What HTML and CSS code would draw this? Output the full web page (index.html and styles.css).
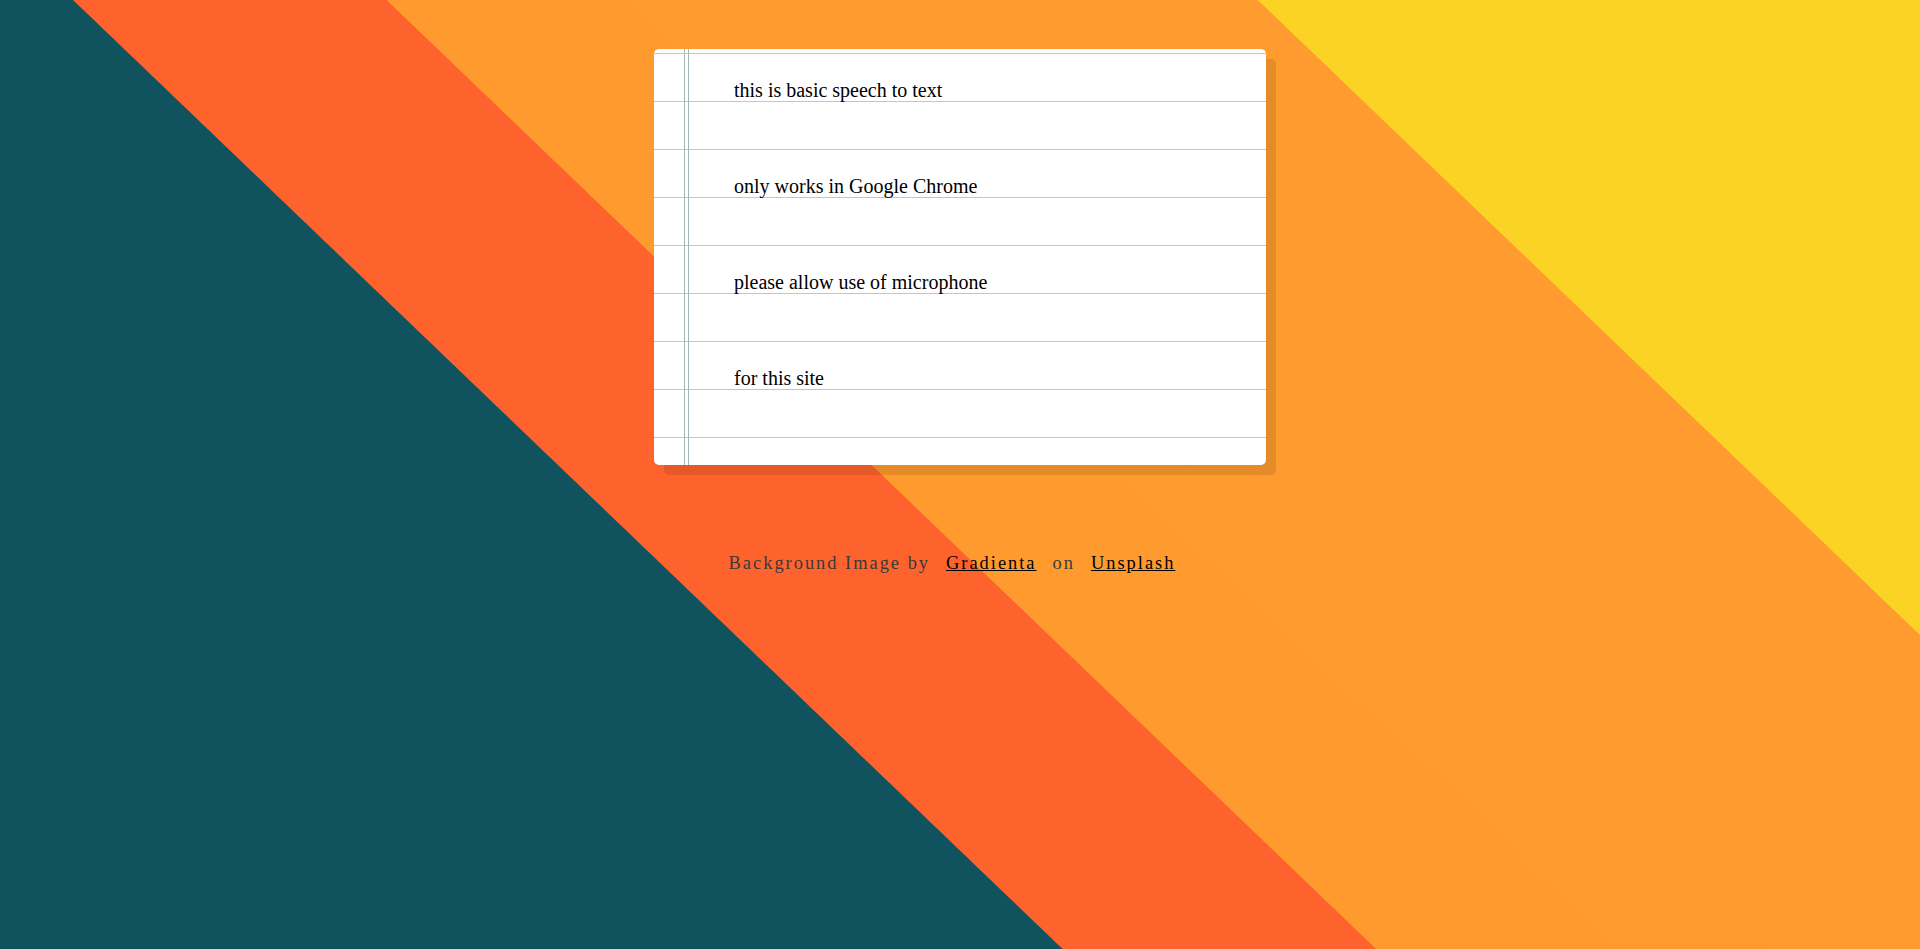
FILE: index.html
```html
<!DOCTYPE html>
<html lang="en">
<head>
<meta charset="utf-8">
<title>Speech to Text</title>
<link rel="stylesheet" href="styles.css">
</head>
<body>
<main class="page">
  <section class="notepad">
    <p class="note-line">this is basic speech to text</p>
    <p class="note-line">only works in Google Chrome</p>
    <p class="note-line">please allow use of microphone</p>
    <p class="note-line">for this site</p>
  </section>
  <footer class="credit">
    <span class="credit-text">Background Image by</span>
    <a class="credit-link" href="#">Gradienta</a>
    <span class="credit-text">on</span>
    <a class="credit-link" href="#">Unsplash</a>
  </footer>
</main>
</body>
</html>
```

FILE: styles.css
```css
html, body {
  margin: 0;
  padding: 0;
  height: 100%;
}

body {
  font-family: "Liberation Serif", "Times New Roman", serif;
  background: linear-gradient(43.8deg,
    #10535f 735px,
    #ff632d 736px,
    #ff632d 952px,
    #ff9a2e 953px,
    #ff9b2f 1555px,
    #fbd324 1556px);
  background-repeat: no-repeat;
  overflow: hidden;
}

.page {
  display: flex;
  flex-direction: column;
  align-items: center;
  padding-top: 49px;
}

.notepad {
  box-sizing: border-box;
  width: 612px;
  height: 416px;
  padding: 17px 0 0 80px;
  border-radius: 5px;
  background-color: #ffffff;
  background-image:
    linear-gradient(to right, transparent 30px, #a3b3b8 30px, #a3b3b8 31px, transparent 31px, transparent 34px, #a3b3b8 34px, #a3b3b8 35px, transparent 35px),
    linear-gradient(to bottom, transparent 4px, #bcc8ce 4px, #bcc8ce 5px, transparent 5px);
  background-size: 100% 100%, 100% 48px;
  background-repeat: no-repeat, repeat-y;
  box-shadow: 10px 10px 0 rgba(0, 0, 0, 0.1);
}

.note-line {
  margin: 0 0 48px 0;
  font-size: 20px;
  line-height: 48px;
  color: #000000;
}

.credit {
  margin-top: 88px;
  margin-left: -16px;
  font-size: 18.4px;
  letter-spacing: 2px;
  color: #3a3a3a;
  display: flex;
  gap: 16px;
}

.credit-link {
  color: #000000;
  text-decoration: underline;
}
```
